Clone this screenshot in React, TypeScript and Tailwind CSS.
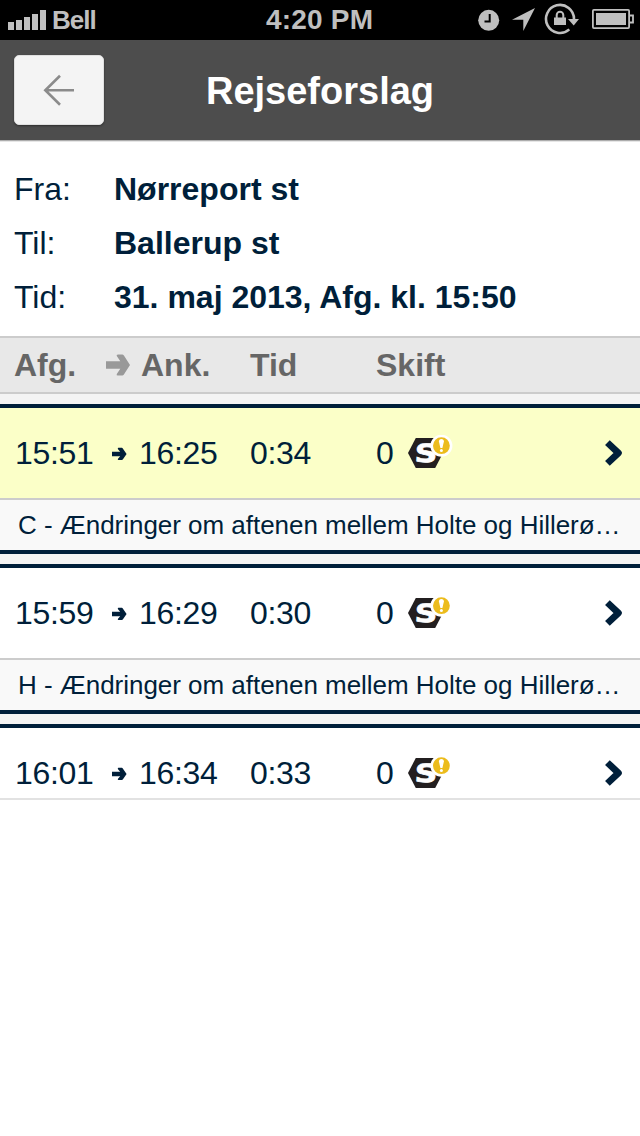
import React from "react";

interface Journey {
  departure: string;
  arrival: string;
  duration: string;
  changes: number;
  notice?: string;
  highlighted?: boolean;
}

const journeys: Journey[] = [
  {
    departure: "15:51",
    arrival: "16:25",
    duration: "0:34",
    changes: 0,
    notice: "C - Ændringer om aftenen mellem Holte og Hillerø…",
    highlighted: true,
  },
  {
    departure: "15:59",
    arrival: "16:29",
    duration: "0:30",
    changes: 0,
    notice: "H - Ændringer om aftenen mellem Holte og Hillerø…",
  },
  { departure: "16:01", arrival: "16:34", duration: "0:33", changes: 0 },
];

const details = [
  { label: "Fra:", value: "Nørreport st" },
  { label: "Til:", value: "Ballerup st" },
  { label: "Tid:", value: "31. maj 2013, Afg. kl. 15:50" },
];

function SignalIcon() {
  return (
    <svg width="38" height="20" viewBox="0 0 38 20" fill="#bfbfbf" className="block">
      <rect x="0" y="12" width="6" height="8" />
      <rect x="8" y="10" width="6" height="10" />
      <rect x="16" y="7" width="6" height="13" />
      <rect x="24" y="4" width="6" height="16" />
      <rect x="32" y="0" width="6" height="20" />
    </svg>
  );
}

function StatusIcons() {
  return (
    <svg width="170" height="40" viewBox="0 0 170 40" className="block shrink-0">
      <circle cx="18.7" cy="20.3" r="10.5" fill="#bfbfbf" />
      <path d="M19.7 14v7.5h-5.2" fill="none" stroke="#000" strokeWidth="2" />
      <path d="M65 8 42 19.7h11.3V31z" fill="#bfbfbf" />
      <path
        d="M104 19A14 14 0 1 0 99.3 29.4"
        fill="none"
        stroke="#bfbfbf"
        strokeWidth="2.6"
      />
      <path d="M98 19h11l-5.3 6.5z" fill="#bfbfbf" />
      <path d="M84 17.5h12V25H84z" fill="#bfbfbf" />
      <path d="M86.7 18v-3a3.3 3.3 0 0 1 6.6 0v3" fill="none" stroke="#bfbfbf" strokeWidth="2" />
      <rect x="122.9" y="9.9" width="36.2" height="18.2" rx="1" fill="none" stroke="#bfbfbf" strokeWidth="1.8" />
      <rect x="126" y="13" width="30" height="12" fill="#bfbfbf" />
      <path d="M159 15.5h4v7h-4" fill="none" stroke="#bfbfbf" strokeWidth="1.8" />
    </svg>
  );
}

function BackIcon() {
  return (
    <svg width="32" height="32" viewBox="0 0 32 32" fill="none" stroke="#8b8b8b" strokeWidth="2.6" className="block">
      <path d="M31 16.3H2.5M17 1.8 2.3 16.3 17 30.8" />
    </svg>
  );
}

function HeadArrow() {
  return (
    <svg width="24" height="22" viewBox="0 0 24 22" fill="#999" className="block">
      <path d="M0 7.2h14.3L10.8 2Q10 .4 12 .4h4.2q1 0 1.7 1L24 11l-6.1 9.6q-.7 1-1.7 1H12q-2 0-1.2-1.6l3.5-5.2H0z" />
    </svg>
  );
}

function RowArrow() {
  return (
    <svg width="15" height="14" viewBox="0 0 15 14" fill="#001f3a" className="block">
      <path d="M0 5.8h8.2L6 3.2Q5.3 1.8 6.5 1.8h3.3q.6 0 1 .6L14.6 8l-3.8 5.6q-.4.4-1 .4H6.5q-1.2 0-.5-1.2l2.2-2.6H0z" />
    </svg>
  );
}

function Chevron() {
  return (
    <svg
      width="20"
      height="28"
      viewBox="0 0 20 28"
      fill="none"
      stroke="#001f3a"
      strokeWidth="6.8"
      strokeLinejoin="round"
      className="block"
    >
      <path d="M3.4 3.6 14.4 14 3.4 24.4" />
    </svg>
  );
}

function STrainLogo() {
  return (
    <svg width="46" height="36" viewBox="0 0 46 36" className="block">
      <path d="M0 18 7.8 3H27l8 15-7.8 15H7.8z" fill="#231f20" />
      <text
        x="0"
        y="0"
        transform="translate(6.2 27.2) skewX(-3) scale(1.26 1)"
        fill="#fff"
        stroke="#fff"
        strokeWidth="0.7"
        className="font-['DejaVu_Sans',sans-serif] text-[25px] font-bold"
      >
        S
      </text>
      <circle cx="33.4" cy="10.7" r="11" fill="#fff" />
      <circle cx="33.4" cy="10.7" r="8.4" fill="#ecbc1c" />
      <path d="M30.9 6.4a2.5 2.5 0 0 1 5 0L34.4 13h-2z" fill="#fff" />
      <circle cx="33.4" cy="15.5" r="1.5" fill="#fff" />
    </svg>
  );
}

function StatusBar() {
  return (
    <div className="flex h-10 items-center bg-black pl-2 font-bold text-[#bfbfbf]">
      <div className="flex w-[258px] items-center gap-[6px]">
        <SignalIcon />
        <span className="text-[26px] leading-10 tracking-[-1px]">Bell</span>
      </div>
      <span className="w-[204px] text-[28px] leading-10 tracking-[0.2px]">4:20 PM</span>
      <StatusIcons />
    </div>
  );
}

function JourneyCard({ journey }: { journey: Journey }) {
  return (
    <div className="mt-[10px] shrink-0 border-y-4 border-[#001f3a]">
      <div
        className={`flex h-[90px] items-center text-[32px] leading-[36px] ${
          journey.highlighted ? "bg-[#fbffc8]" : "bg-white"
        }`}
      >
        <span className="w-[98px] pl-[15px] tracking-[-0.3px]">{journey.departure}</span>
        <span className="w-[41px] pl-[14px]">
          <RowArrow />
        </span>
        <span className="w-[111px] tracking-[-0.3px]">{journey.arrival}</span>
        <span className="w-[126px] tracking-[-0.3px]">{journey.duration}</span>
        <span className="w-[32px]">{journey.changes}</span>
        <STrainLogo />
        <span className="ml-auto pr-[16px]">
          <Chevron />
        </span>
      </div>
      {journey.notice && (
        <p className="h-[52px] border-t-2 border-[#ccc] bg-[#f9f9f9] pl-[18px] text-[26px] leading-[50px] tracking-[-0.03px] whitespace-nowrap">
          {journey.notice}
        </p>
      )}
    </div>
  );
}

export default function App() {
  return (
    <div className="h-[1136px] w-[640px] overflow-hidden bg-white font-['Liberation_Sans',Arial,sans-serif] text-[#001f3a]">
      <StatusBar />
      <header className="grid h-[100px] grid-cols-[90px_1fr_90px] items-center bg-[#4d4d4d] px-[14px]">
        <button
          aria-label="Tilbage"
          className="flex h-[70px] w-[90px] items-center justify-center rounded-[5px] border border-[#e0e0e0] bg-[#f4f4f4] shadow-[0_1px_2px_rgba(0,0,0,0.4)]"
        >
          <BackIcon />
        </button>
        <h1 className="pt-[2px] text-center text-[38px] leading-[44px] font-bold text-white">Rejseforslag</h1>
      </header>
      <div className="h-[2px] border-t border-[#adadad] bg-[#e6e6e6]" />
      <dl className="h-[194px] pt-5 text-[32px] leading-[54px]">
        {details.map((d) => (
          <div key={d.label} className="flex pl-[14px]">
            <dt className="w-[100px]">{d.label}</dt>
            <dd className="font-bold">{d.value}</dd>
          </div>
        ))}
      </dl>
      <section className="flex h-[464px] flex-col overflow-hidden border-b-2 border-[#e2e2e2] bg-[#f4f4f4]">
        <div className="flex h-[58px] shrink-0 items-center border-y-2 border-[#ccc] bg-[#e8e8e8] text-[32px] font-bold text-[#666]">
          <span className="w-[106px] pl-[14px]">Afg.</span>
          <HeadArrow />
          <span className="w-[120px] pl-[11px]">Ank.</span>
          <span className="w-[126px]">Tid</span>
          <span>Skift</span>
        </div>
        {journeys.map((j) => (
          <JourneyCard key={j.departure} journey={j} />
        ))}
      </section>
    </div>
  );
}
